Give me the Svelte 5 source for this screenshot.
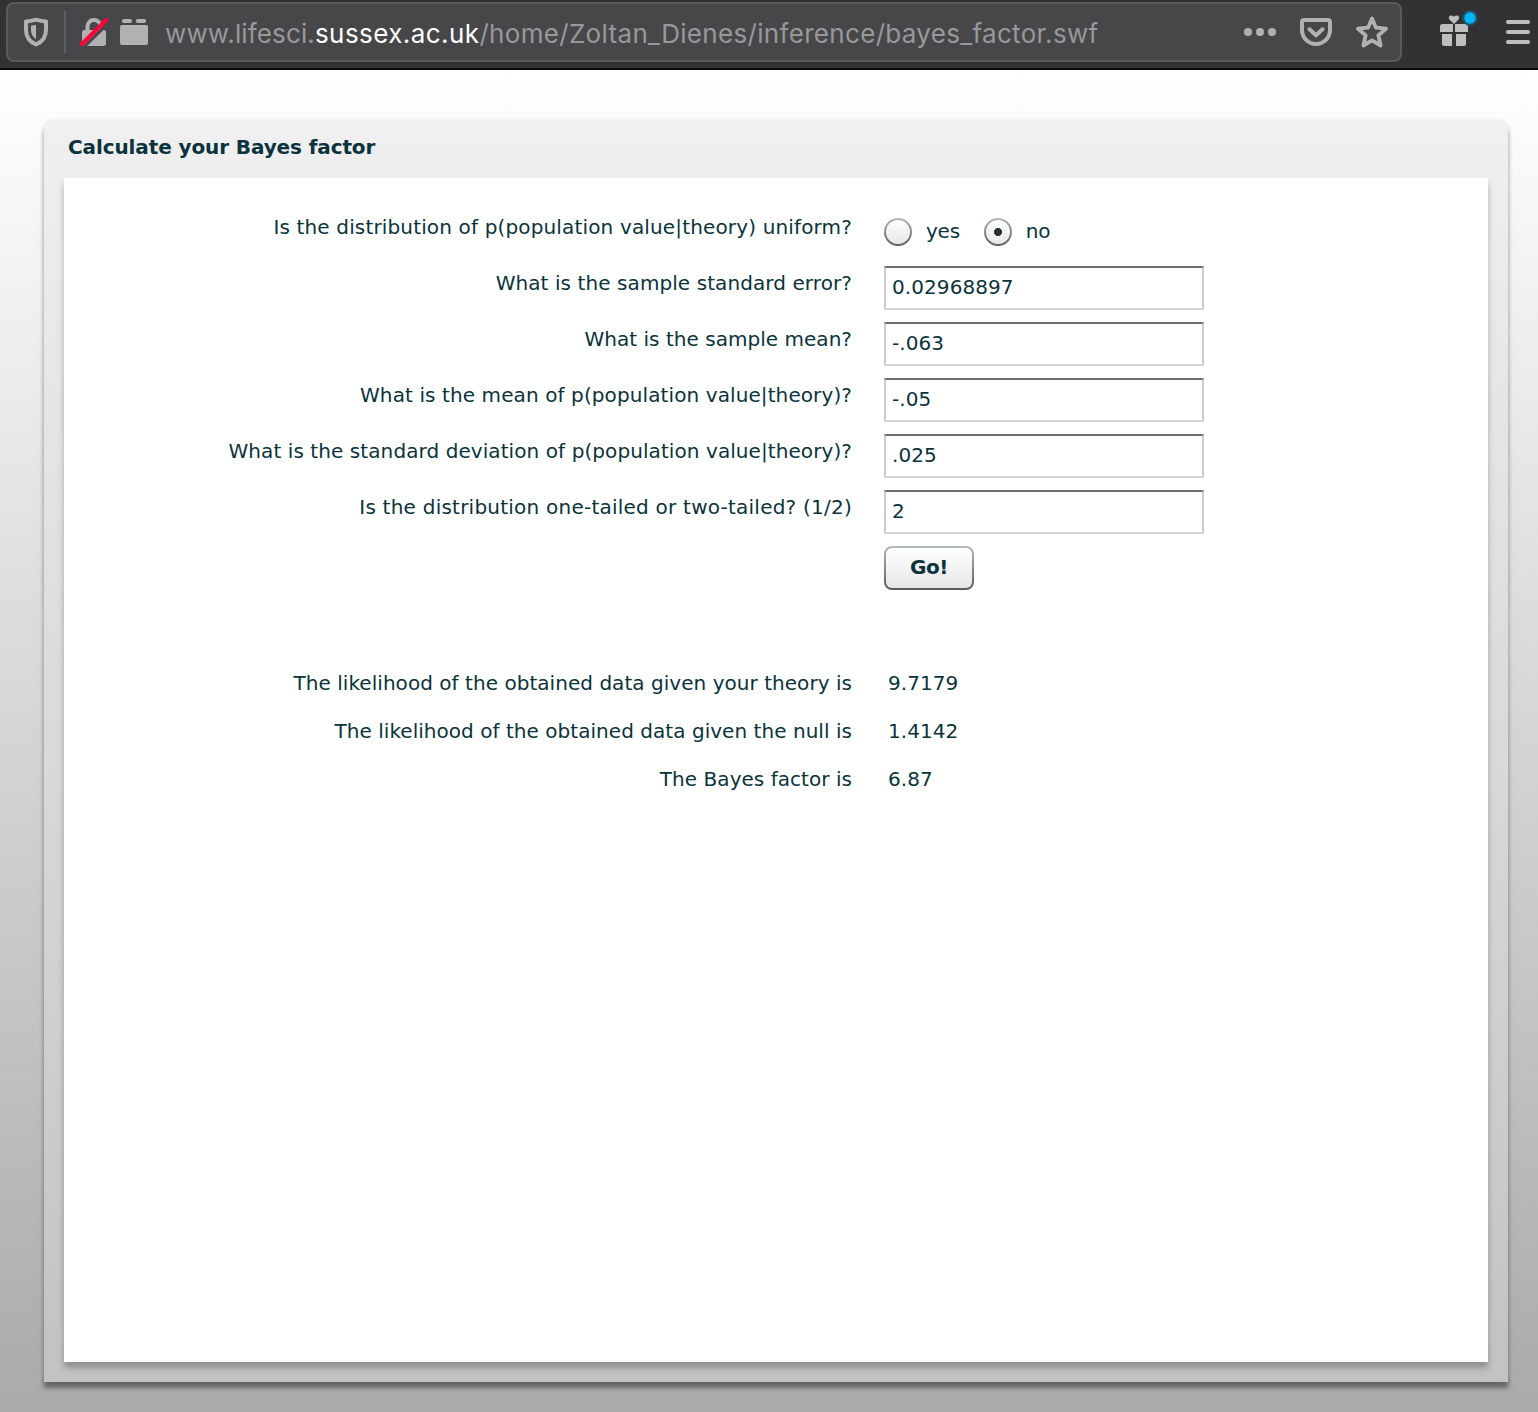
<script>
  let uniform = $state('no');
  const choices = ['yes', 'no'];
  let fields = $state([
    { label: 'What is the sample standard error?', value: '0.02968897', tracking: 0.08 },
    { label: 'What is the sample mean?', value: '-.063', tracking: 0.03 },
    { label: 'What is the mean of p(population value|theory)?', value: '-.05', tracking: 0.1 },
    { label: 'What is the standard deviation of p(population value|theory)?', value: '.025', tracking: 0.08 },
    { label: 'Is the distribution one-tailed or two-tailed? (1/2)', value: '2', tracking: 0.23 }
  ]);
  const results = [
    { label: 'The likelihood of the obtained data given your theory is', value: '9.7179' },
    { label: 'The likelihood of the obtained data given the null is', value: '1.4142' },
    { label: 'The Bayes factor is', value: '6.87' }
  ];
</script>

<div class="window">
  <header class="toolbar">
    <div class="urlbar">
      <svg class="shield" width="28" height="32" viewBox="0 0 28 32">
        <path d="M4 5.6Q9 5.3 14 3.7Q19 5.3 24 5.6V14C24 21 20 26 14 28.5C8 26 4 21 4 14Z" fill="none" stroke="#b1b1b3" stroke-width="4" stroke-linejoin="round" />
        <path d="M14 8.7V23.3C10.5 21 9 17.5 9 14V9.8Z" fill="#b1b1b3" />
      </svg>
      <span class="divider"></span>
      <svg class="lock" width="30" height="32" viewBox="0 0 30 32">
        <path d="M8.5 15V10.5a6.5 6.5 0 0 1 13 0V15" fill="none" stroke="#b1b1b3" stroke-width="4" />
        <rect x="3" y="14" width="24" height="16" rx="2.5" fill="#b1b1b3" />
        <path d="M4.5 31.5L29.5 6.8" stroke="#474749" stroke-width="3" />
        <path d="M3 28L27 4.2" stroke="#ff0039" stroke-width="4.2" stroke-linecap="round" />
      </svg>
      <svg class="plugin" width="28" height="26" viewBox="0 0 28 26">
        <rect x="2" y="0" width="10" height="4" rx="1.8" fill="#b1b1b3" />
        <rect x="16" y="0" width="10" height="4" rx="1.8" fill="#b1b1b3" />
        <rect x="0" y="6" width="28" height="20" rx="2" fill="#b1b1b3" />
      </svg>
      <div class="url"><span class="sub">www.lifesci.</span><span class="host">sussex.ac.uk</span><span class="path">/home/Zoltan_Dienes/inference/bayes_factor.swf</span></div>
      <svg class="dots" width="32" height="8" viewBox="0 0 32 8" fill="#b1b1b3">
        <circle cx="4" cy="4" r="4" /><circle cx="16" cy="4" r="4" /><circle cx="28" cy="4" r="4" />
      </svg>
      <svg class="pocket" width="32" height="28" viewBox="0 0 32 28" fill="none" stroke="#b1b1b3" stroke-width="4" stroke-linejoin="round">
        <path d="M4 2H28a2 2 0 0 1 2 2V12a14 14 0 0 1-28 0V4a2 2 0 0 1 2-2Z" />
        <path d="M9.5 11.3L16 17.3L22.5 11.3" stroke-linecap="round" />
      </svg>
      <svg class="star" width="32" height="32" viewBox="0 0 32 32">
        <path d="M16 2.5L20 11.7L30 12.7L22.4 19.3L24.6 29.5L16 24.3L7.4 29.5L9.6 19.3L2 12.7L12 11.7Z" fill="none" stroke="#b1b1b3" stroke-width="3.8" stroke-linejoin="round" />
      </svg>
    </div>
    <svg class="gift" width="40" height="38" viewBox="0 0 40 38">
      <path d="M15 16L10.7 11.7C8.2 9 12 5.8 15 8.7C18 5.8 21.8 9 19.3 11.7Z" fill="#bebebe" />
      <path d="M3.5 16H14V24H1V18.5A2.5 2.5 0 0 1 3.5 16ZM16 16H26.5A2.5 2.5 0 0 1 29 18.5V24H16ZM3 26H13V38H5a2 2 0 0 1-2-2ZM17 26H27V36a2 2 0 0 1-2 2H17Z" fill="#bebebe" />
      <circle cx="31" cy="10" r="7.7" fill="#1e526b" />
      <circle cx="31" cy="10" r="5.7" fill="#00b3f4" />
    </svg>
    <svg class="menu" width="24" height="24" viewBox="0 0 24 24" fill="#bebebe">
      <rect width="24" height="4" rx="2" /><rect y="10" width="24" height="4" rx="2" /><rect y="20" width="24" height="4" rx="2" />
    </svg>
  </header>

  <main class="page">
    <section class="panel">
      <h1>Calculate your Bayes factor</h1>
      <div class="content">
        <div class="row">
          <span class="label uniform">Is the distribution of p(population value|theory) uniform?</span>
          <div class="radios">
            {#each choices as choice}
              <label class="choice">
                <input type="radio" name="uniform" value={choice} bind:group={uniform} />
                <span>{choice}</span>
              </label>
            {/each}
          </div>
        </div>
        {#each fields as field}
          <label class="row">
            <span class="label" style:letter-spacing="{field.tracking}px">{field.label}</span>
            <input class="text" type="text" bind:value={field.value} />
          </label>
        {/each}
        <div class="row">
          <span></span>
          <button type="button">Go!</button>
        </div>
        <div class="results">
          {#each results as result}
            <div class="result">
              <span class="label">{result.label}</span>
              <span>{result.value}</span>
            </div>
          {/each}
        </div>
      </div>
    </section>
  </main>
</div>

<style>
  :global(body) { margin: 0; }
  .window {
    box-sizing: border-box;
    width: 1538px;
    height: 1412px;
    display: flex;
    flex-direction: column;
    overflow: hidden;
    color: #0b333c;
    font: 20px/24px "DejaVu Sans", Verdana, sans-serif;
  }
  svg { display: block; flex: none; }
  .toolbar {
    box-sizing: border-box;
    flex: none;
    height: 70px;
    padding: 2px 0 0 6px;
    display: flex;
    align-items: flex-start;
    background: #323234;
    border-bottom: 2px solid #0c0c0d;
  }
  .urlbar {
    box-sizing: border-box;
    width: 1396px;
    height: 60px;
    padding: 0 12px 0 14px;
    display: flex;
    align-items: center;
    border: 2px solid #5a5a5c;
    border-radius: 8px;
    background: #474749;
  }
  .divider { width: 2px; height: 42px; margin: 0 13px 0 14px; background: #5c616c; }
  .plugin { margin: 0 17px 0 11px; }
  .url {
    flex: 1;
    white-space: nowrap;
    font: 26px/32px Inter, "Liberation Sans", sans-serif;
    color: #98989a;
    padding-top: 3px;
  }
  .sub { letter-spacing: 0.13px; }
  .host { color: #fff; letter-spacing: 0.42px; }
  .path { letter-spacing: 0.32px; }
  .pocket { margin: 0 24px; }
  .gift { margin: 6px 0 0 37px; }
  .menu { margin: 18px 0 0 27px; }
  .page {
    flex: 1;
    padding: 48px 30px 30px 44px;
    background: linear-gradient(#fff, #aaa);
  }
  .panel {
    box-sizing: border-box;
    height: 1264px;
    padding: 2px 20px 20px;
    border-radius: 10px 10px 0 0;
    background: linear-gradient(#f4f4f4 0, #f4f4f4 2px, #f0f0f0 2px, #c2c2c2);
    box-shadow: 0 6px 5px rgba(0, 0, 0, 0.42);
  }
  h1 {
    height: 58px;
    margin: 0;
    padding: 14px 4px 0;
    box-sizing: border-box;
    font-size: 20px;
    line-height: 26px;
    font-weight: 700;
    letter-spacing: -0.11px;
  }
  .content {
    box-sizing: border-box;
    height: 1184px;
    padding-top: 32px;
    background: #fff;
    box-shadow: 0 6px 6px rgba(0, 0, 0, 0.25);
  }
  .row, .result {
    display: grid;
    grid-template-columns: 788px 320px;
    column-gap: 32px;
  }
  .row { height: 44px; margin-bottom: 12px; }
  .label { text-align: right; white-space: nowrap; padding-top: 5px; }
  .uniform { letter-spacing: 0.15px; }
  .radios { display: flex; gap: 24px; padding-top: 8px; height: 28px; }
  .choice { display: flex; gap: 14px; }
  .choice span { line-height: 26px; letter-spacing: -0.25px; }
  input[type="radio"] {
    appearance: none;
    box-sizing: border-box;
    width: 28px;
    height: 28px;
    margin: 0;
    border: 2px solid transparent;
    border-radius: 50%;
    background: linear-gradient(#fff, #e8e8e8) padding-box, linear-gradient(#b5babd, #5e5e5e) border-box;
  }
  input[type="radio"]:checked {
    background: radial-gradient(circle, #273039 3.7px, transparent 4.3px) padding-box, linear-gradient(#fff, #e8e8e8) padding-box, linear-gradient(#b5babd, #5e5e5e) border-box;
  }
  .text {
    box-sizing: border-box;
    width: 320px;
    height: 44px;
    padding: 0 6px 3px;
    border: 2px solid #ccc;
    border-top-color: #6f7073;
    border-bottom-color: #d5d5d5;
    border-radius: 0;
    background: #fff;
    color: inherit;
    font: inherit;
    letter-spacing: 0.08px;
    outline: 0;
  }
  button {
    box-sizing: border-box;
    width: 90px;
    height: 44px;
    padding: 0 0 3px;
    border: 2px solid transparent;
    border-radius: 8px;
    background: linear-gradient(#fff, #e6e6e6) padding-box, linear-gradient(#b5babd, #5a5a5a) border-box;
    color: inherit;
    font: bold 20px/24px "DejaVu Sans", Verdana, sans-serif;
    letter-spacing: -0.4px;
  }
  .results { margin-top: 76px; }
  .result { height: 48px; letter-spacing: 0.04px; }
  .result span { padding-top: 5px; }
  .result span:last-child { padding-left: 4px; }
</style>
